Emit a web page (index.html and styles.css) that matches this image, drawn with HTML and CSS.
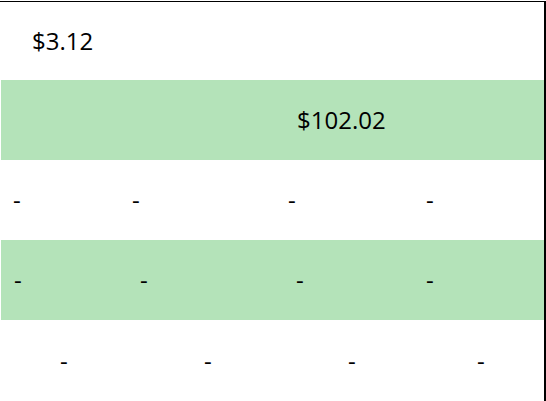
FILE: index.html
```html
<!DOCTYPE html>
<html>
<head>
<meta charset="utf-8">
<link rel="stylesheet" href="styles.css">
</head>
<body>
<div class="sheet">
  <div class="row row-a">
    <div class="cell">$3.12</div>
  </div>
  <div class="row row-b green">
    <div class="cell">$102.02</div>
  </div>
  <div class="row row-c">
    <div class="cell">-</div>
    <div class="cell">-</div>
    <div class="cell">-</div>
    <div class="cell">-</div>
  </div>
  <div class="row row-d green">
    <div class="cell">-</div>
    <div class="cell">-</div>
    <div class="cell">-</div>
    <div class="cell">-</div>
  </div>
  <div class="row row-e">
    <div class="cell">-</div>
    <div class="cell">-</div>
    <div class="cell">-</div>
    <div class="cell">-</div>
  </div>
</div>
</body>
</html>
```

FILE: styles.css
```css
html, body {
  margin: 0;
  padding: 0;
  background: #ffffff;
}

body {
  font-family: "Open Sans", "Liberation Sans", sans-serif;
  font-size: 24px;
  color: #000000;
}

.sheet {
  width: 543px;
  height: 399px;
  margin-top: 1px;
  padding-left: 1px;
  border-top: 1px solid #000000;
  border-right: 2px solid #000000;
  display: flex;
  flex-direction: column;
}

.row {
  display: grid;
  align-items: center;
  height: 80px;
  flex: none;
}

.green {
  background: #b4e3b9;
}

.cell {
  white-space: nowrap;
  line-height: 1;
}

.row-a {
  height: 78px;
  padding-left: 31px;
}

.row-b {
  padding-left: 296px;
}

.row-c {
  padding-left: 12px;
  grid-template-columns: 119px 156px 138px 1fr;
}

.row-d {
  padding-left: 13px;
  grid-template-columns: 126px 156px 130px 1fr;
}

.row-e {
  height: 81px;
  padding-left: 59px;
  grid-template-columns: 144px 144px 129px 1fr;
}
```
